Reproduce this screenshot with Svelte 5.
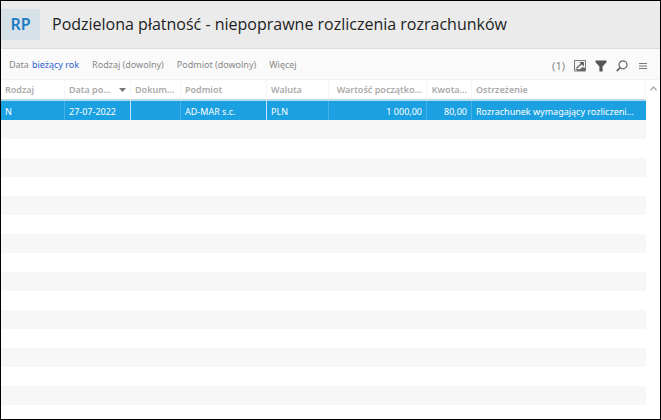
<script lang="ts">
  const filters = [
    { label: 'Data', value: 'bieżący rok' },
    { label: 'Rodzaj (dowolny)' },
    { label: 'Podmiot (dowolny)' },
    { label: 'Więcej' }
  ];

  const columns = [
    { key: 'kind', label: 'Rodzaj' },
    { key: 'date', label: 'Data po...', sorted: true },
    { key: 'doc', label: 'Dokum...' },
    { key: 'party', label: 'Podmiot' },
    { key: 'currency', label: 'Waluta' },
    { key: 'value', label: 'Wartość początko...', numeric: true },
    { key: 'amount', label: 'Kwota...', numeric: true },
    { key: 'warning', label: 'Ostrzeżenie' }
  ];

  const rows: Record<string, string>[] = [
    {
      kind: 'N',
      date: '27-07-2022',
      doc: '',
      party: 'AD-MAR s.c.',
      currency: 'PLN',
      value: '1 000,00',
      amount: '80,00',
      warning: 'Rozrachunek wymagający rozliczeni...'
    }
  ];

  const blankRows = Array.from({ length: 15 }, (_, i) => i);
</script>

<main class="window">
  <header class="header">
    <span class="badge">RP</span>
    <h1>Podzielona płatność - niepoprawne rozliczenia rozrachunków</h1>
  </header>

  <div class="toolbar">
    <div class="filters">
      {#each filters as filter (filter.label)}
        <button type="button" class="filter">
          {filter.label}
          {#if filter.value}<span class="chosen">{filter.value}</span>{/if}
        </button>
      {/each}
    </div>
    <div class="tools">
      <span class="count">({rows.length})</span>
      <button type="button" aria-label="Otwórz">
        <svg width="12" height="12" viewBox="0 0 12 12">
          <path d="M.5.5h11v10.5H.5z" fill="#f4f4f4" stroke="#777" />
          <path d="M1 8.5 3.5 11H11V8L8.5 7 5.5 9.5z" fill="#666" />
          <path d="M2.5 8.3 7.5 3.7" fill="none" stroke="#666" stroke-width="1.4" />
          <path d="M5.4 2h4.4v4.4z" fill="#555" />
        </svg>
      </button>
      <button type="button" aria-label="Filtruj">
        <svg width="12" height="12" viewBox="0 0 12 12">
          <path d="M.5.5h11v1.7L7.6 6.4V11.5H4.4V6.4L.5 2.2z" fill="#555" />
        </svg>
      </button>
      <button type="button" aria-label="Szukaj">
        <svg width="12" height="12" viewBox="0 0 12 12" fill="none" stroke="#666">
          <circle cx="7" cy="4.8" r="4" stroke-width="1.2" />
          <path d="M4.1 7.7.8 11.1" stroke-width="1.7" />
        </svg>
      </button>
      <button type="button" class="menu" aria-label="Menu">
        <svg width="8" height="8" viewBox="0 0 8 8">
          <path d="M0 1.5h8M0 4h8M0 6.5h8" stroke="#777" stroke-width="1.1" />
        </svg>
      </button>
    </div>
  </div>

  <div class="grid">
    <table>
      <colgroup>
        {#each columns as column (column.key)}
          <col class={column.key} />
        {/each}
      </colgroup>
      <thead>
        <tr>
          {#each columns as column (column.key)}
            <th class:numeric={column.numeric} scope="col">
              {#if column.sorted}
                <span class="sorted">
                  {column.label}
                  <svg width="7" height="4" viewBox="0 0 7 4">
                    <path d="M0 0h7L3.5 4z" fill="#777" />
                  </svg>
                </span>
              {:else}
                {column.label}
              {/if}
            </th>
          {/each}
        </tr>
      </thead>
      <tbody>
        {#each rows as row}
          <tr class="selected">
            {#each columns as column (column.key)}
              <td class:numeric={column.numeric}>{row[column.key]}</td>
            {/each}
          </tr>
        {/each}
        {#each blankRows as i (i)}
          <tr class="blank"><td colspan={columns.length}></td></tr>
        {/each}
      </tbody>
    </table>
    <div class="scroll">
      <button type="button" aria-label="Przewiń w górę">
        <svg width="7" height="5" viewBox="0 0 7 5">
          <path d="M.5 4.3 3.5 1l3 3.3" fill="none" stroke="#aaa" stroke-width="1.3" />
        </svg>
      </button>
    </div>
  </div>
</main>

<style>
  :global(body) {
    margin: 0;
    background: #fff;
  }
  .window {
    box-sizing: border-box;
    min-height: 100vh;
    border: 1px solid #000;
    background: #fff;
    font-family: 'Noto Sans', 'Open Sans', sans-serif;
    font-size: 9px;
    color: #888;
  }
  button {
    display: flex;
    align-items: center;
    padding: 0;
    border: 0;
    background: none;
    font: inherit;
    color: inherit;
  }
  svg {
    display: block;
  }
  .header {
    display: flex;
    align-items: center;
    gap: 12px;
    height: 47px;
    border-bottom: 1px solid #dedede;
    background: #ebebeb;
  }
  .badge {
    width: 39px;
    line-height: 31px;
    background: #d7e1e8;
    color: #1f7ec2;
    font-size: 16px;
    font-weight: 600;
    text-align: center;
  }
  h1 {
    margin: 0;
    padding-bottom: 2px;
    font-family: 'Open Sans', 'Noto Sans', sans-serif;
    font-size: 16px;
    font-weight: 400;
    line-height: 24px;
    color: #222;
    white-space: nowrap;
  }
  .toolbar {
    display: flex;
    justify-content: space-between;
    height: 30px;
    padding: 0 13px 0 8px;
    border-bottom: 1px solid #f2f2f2;
    background: #fafafa;
  }
  .filters,
  .tools {
    display: flex;
    align-items: center;
  }
  .filters {
    gap: 13px;
  }
  .filter {
    gap: 3px;
    white-space: nowrap;
  }
  .chosen {
    color: #2b5fd0;
  }
  .tools {
    gap: 9px;
    padding-top: 4px;
  }
  .count {
    font-size: 11px;
    line-height: 12px;
  }
  .menu {
    margin-left: 2px;
  }
  .grid {
    display: flex;
  }
  table {
    flex: 1;
    width: 0;
    border-collapse: separate;
    border-spacing: 0;
    table-layout: fixed;
  }
  .kind {
    width: 64px;
  }
  .date {
    width: 66px;
  }
  .doc {
    width: 50px;
  }
  .party {
    width: 86px;
  }
  .currency {
    width: 62px;
  }
  .value {
    width: 98px;
  }
  .amount {
    width: 45px;
  }
  th,
  td {
    box-sizing: border-box;
    height: 19px;
    padding: 0 4px;
    line-height: 18px;
    text-align: left;
    white-space: nowrap;
    overflow: hidden;
  }
  th {
    height: 21px;
    border-right: 1px solid #f5f5f5;
    border-bottom: 2px solid #b9d9e8;
    color: #aaa;
    font-weight: 600;
  }
  .numeric {
    text-align: right;
  }
  .sorted {
    display: flex;
    align-items: center;
    justify-content: space-between;
  }
  .selected td {
    padding-top: 3px;
    border-right: 1px solid #45b0e6;
    background: #1ba1e2;
    color: #fff;
    line-height: 16px;
  }
  .selected td:nth-child(2),
  .selected td:nth-child(4) {
    border-right-color: #c5e6f7;
  }
  .selected td:last-child {
    border-right: 0;
  }
  .blank:nth-child(even) td {
    background: #f7f7f7;
  }
  .scroll {
    display: flex;
    align-items: flex-start;
    justify-content: center;
    width: 14px;
    padding-top: 6px;
  }
</style>
